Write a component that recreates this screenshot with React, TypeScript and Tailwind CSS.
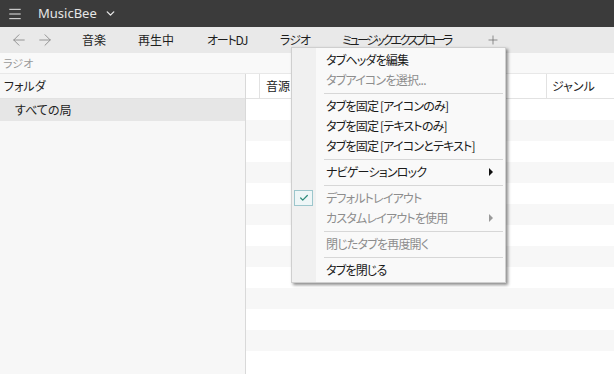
import { Menu, ChevronDown, ArrowLeft, ArrowRight, Plus, Check } from 'lucide-react';

const font = { fontFamily: '"Noto Sans CJK JP", "Noto Sans", sans-serif' };

const tabs = [
  { label: '音楽', cls: 'w-[56px]' },
  { label: '再生中', cls: 'w-[69px]' },
  { label: 'オートDJ', cls: 'w-[73px] tracking-[-1.2px]' },
  { label: 'ラジオ', cls: 'w-[62px] tracking-[-1px]' },
  { label: 'ミュージックエクスプローラ', cls: 'w-[144px] tracking-[-2.5px]' },
];

type Item =
  | { sep: true }
  | { sep?: false; label: string; disabled?: boolean; sub?: boolean; checked?: boolean };

const menu: Item[] = [
  { label: 'タブヘッダを編集' },
  { label: 'タブアイコンを選択...', disabled: true },
  { sep: true },
  { label: 'タブを固定 [アイコンのみ]' },
  { label: 'タブを固定 [テキストのみ]' },
  { label: 'タブを固定 [アイコンとテキスト]' },
  { sep: true },
  { label: 'ナビゲーションロック', sub: true },
  { sep: true },
  { label: 'デフォルトレイアウト', disabled: true, checked: true },
  { label: 'カスタムレイアウトを使用', disabled: true, sub: true },
  { sep: true },
  { label: '閉じたタブを再度開く', disabled: true },
  { sep: true },
  { label: 'タブを閉じる' },
];

function ContextMenu() {
  return (
    <div className="absolute left-[291px] top-[47px] w-[215px] bg-[#f9f9f9] border border-[#cfcfcf] shadow-[2px_2px_3px_rgba(0,0,0,0.45)] py-[2px]">
      <div className="absolute left-0 top-0 bottom-0 w-[24px] bg-[#f0f0f0]" />
      <div className="relative">
        {menu.map((item, i) =>
          item.sep ? (
            <div key={i} className="h-[6px] flex items-center pl-[32px] pr-[2px]">
              <div className="h-px w-full bg-[#d7d7d7]" />
            </div>
          ) : (
            <div
              key={i}
              className={`h-[20px] flex items-center pl-[34px] pr-[12px] text-[12px] leading-none whitespace-nowrap ${item.disabled ? 'text-[#8d8d8d]' : 'text-[#1a1a1a]'}`}
            >
              {item.checked && (
                <div className="absolute left-[2px] w-[19px] h-[16px] border border-[#9cc6cc] bg-[#eef6f7] flex items-center justify-center">
                  <Check size={10} strokeWidth={3} className="text-[#2e8b7b]" />
                </div>
              )}
              <span className="flex-1 tracking-[-0.8px]">{item.label}</span>
              {item.sub && (
                <span
                  className={`w-0 h-0 border-y-[4px] border-y-transparent border-l-[4px] ${item.disabled ? 'border-l-[#9a9a9a]' : 'border-l-[#111]'}`}
                />
              )}
            </div>
          )
        )}
      </div>
    </div>
  );
}

export default function App() {
  return (
    <div
      className="relative w-[614px] h-[374px] overflow-hidden bg-white flex flex-col [font-feature-settings:'palt']"
      style={font}
    >
      {/* title bar */}
      <div className="h-[27px] bg-[#3b3b3b] flex items-center pl-[7px] text-[#e6e6e6]">
        <Menu size={16} strokeWidth={1.5} />
        <span className="ml-[15px] text-[13px] leading-none" style={{ fontFamily: '"Noto Sans", sans-serif' }}>MusicBee</span>
        <ChevronDown size={13} strokeWidth={2.5} className="ml-[7px]" />
      </div>

      {/* tab bar */}
      <div className="h-[26px] bg-[#e9e9e9] flex items-center text-[12px] text-[#1e1e1e]">
        <ArrowLeft size={18} strokeWidth={1.2} className="ml-[10px] text-[#8a8a8a]" />
        <ArrowRight size={18} strokeWidth={1.2} className="ml-[8px] text-[#8a8a8a]" />
        <div className="flex items-center ml-[28px] whitespace-nowrap">
          {tabs.map((t) => (
            <span key={t.label} className={`leading-none ${t.cls}`}>{t.label}</span>
          ))}
        </div>
        <Plus size={14} strokeWidth={1.2} className="text-[#666]" />
      </div>

      {/* breadcrumb */}
      <div className="h-[21px] bg-[#f9f9f9] border-b border-[#e8e8e8] flex items-center pl-[3px] text-[11px] text-[#9a9a9a]">
        ラジオ
      </div>

      {/* body */}
      <div className="flex flex-1 min-h-0">
        <div className="w-[246px] bg-[#f7f7f7] border-r border-[#d9d9d9] flex flex-col">
          <div className="h-[25px] border-b border-[#e2e2e2] flex items-center pl-[4px] text-[12px] text-[#222]">
            フォルダ
          </div>
          <div className="h-[22px] bg-[#e6e6e6] flex items-center pl-[15px] text-[12px] text-[#222]">
            すべての局
          </div>
        </div>
        <div className="flex-1 flex flex-col">
          <div className="h-[25px] border-b border-[#e2e2e2] flex items-center text-[12px] text-[#222] bg-white">
            <div className="w-[14px] h-full border-r border-[#e2e2e2]" />
            <span className="ml-[6px] w-[280px]">音源</span>
            <div className="h-full border-l border-[#e2e2e2] pl-[5px] flex items-center">ジャンル</div>
          </div>
          {Array.from({ length: 13 }).map((_, i) => (
            <div key={i} className={`h-[21px] shrink-0 ${i % 2 === 0 ? 'bg-white' : 'bg-[#f7f7f7]'}`} />
          ))}
        </div>
      </div>

      <ContextMenu />
    </div>
  );
}
